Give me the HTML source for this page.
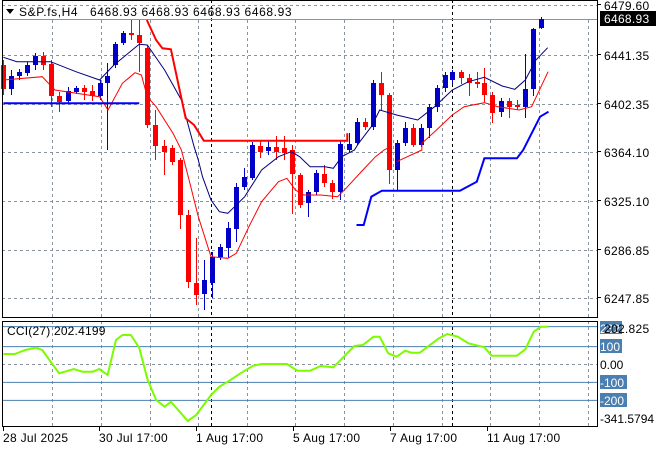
<!DOCTYPE html><html><head><style>
body{margin:0;background:#fff;width:660px;height:450px;overflow:hidden}
svg{display:block;font-family:"Liberation Sans",sans-serif;font-size:12px}
</style></head><body>
<svg id="s" width="660" height="450" xmlns="http://www.w3.org/2000/svg"></svg>
<script>
var S=document.getElementById('s'),h='';
var K=2.37;
function X(z){return z/K}
function line(x1,y1,x2,y2,c,w,d){h+='<line x1="'+x1+'" y1="'+y1+'" x2="'+x2+'" y2="'+y2+'" stroke="'+c+'" stroke-width="'+(w||1)+'"'+(d?' stroke-dasharray="'+d+'"':'')+'/>';}
function txt(x,y,t,c,a,ls){h+='<text x="'+x+'" y="'+y+'" fill="'+(c||'#000')+'"'+(a?' text-anchor="'+a+'"':'')+(ls?' letter-spacing="'+ls+'"':'')+'>'+t+'</text>';}
var gx=[52,101,150,198,247,295,344,393,442,490,539,588];
gx.forEach(function(x){line(x+.5,20,x+.5,317,'#8a93a0',1,'3,3');line(x+.5,321,x+.5,426,'#8a93a0',1,'3,3');});
[5,55,104,152,201,250,298].forEach(function(y){line(2,y+.5,597,y+.5,'#8a93a0',1,'3,3');});
[211,452].forEach(function(x){line(x+.5,0,x+.5,317,'#000',1,'3,3');line(x+.5,321,x+.5,426,'#000',1,'3,3');});
line(2,19.5,597,19.5,'#8a93a0',1);
var C=[[8,'r',65,89,60,95],[26,'b',76,89,70,95],[46,'b',72,76,69,80],[64,'b',65,73,62,76],[83,'b',56,65,53,70],[103,'r',56,65,52,70],[122,'r',64,96,60,107],[141,'r',96,102,92,112],[160,'b',91,101,87,103],[179,'b',88,92,86,94],[198,'r',88,92,85,100],[217,'r',91,96,85,101],[236,'b',83,96,80,100],[254,'b',76,83,63,150],[273,'b',44,65,42,68],[292,'b',33,43,31,45],[311,'r',33,35,20,40],[330,'r',35,43,20,72],[349,'r',48,125,45,128],[368,'r',125,146,110,160],[388,'r',146,152,140,175],[407,'r',148,162,145,165],[427,'r',160,215,158,229],[446,'r',215,282,210,288],[465,'r',283,295,238,305],[484,'b',280,294,260,310],[502,'b',257,283,252,298],[521,'b',247,257,244,260],[541,'b',228,248,222,258],[559,'b',187,229,183,242],[578,'b',177,187,168,190],[597,'b',145,178,142,180],[616,'r',146,152,140,158],[636,'b',147,151,140,155],[655,'r',147,152,136,160],[674,'r',148,153,136,160],[692,'r',150,174,145,214],[711,'r',175,205,173,208],[730,'b',192,203,190,217],[749,'b',173,192,170,195],[768,'r',174,183,165,187],[787,'r',183,192,180,199],[806,'b',144,192,140,200],[826,'b',144,150,133,152],[845,'b',122,143,118,145],[864,'r',122,127,118,130],[883,'b',83,127,80,130],[902,'r',83,95,72,110],[921,'r',95,170,93,184],[940,'b',143,170,140,190],[959,'b',128,143,122,146],[978,'r',128,145,124,147],[997,'b',128,145,124,147],[1016,'b',107,128,104,138],[1035,'b',88,107,85,112],[1054,'b',75,88,72,92],[1072,'b',72,80,70,84],[1092,'r',72,78,70,84],[1111,'r',78,83,74,96],[1130,'r',82,84,72,88],[1148,'r',83,95,68,102],[1167,'r',95,113,92,123],[1187,'b',101,112,98,117],[1206,'r',101,107,98,118],[1225,'r',105,107,100,110],[1244,'b',89,107,54,118],[1263,'b',29,89,28,96],[1282,'b',19,28,17,29]];
C.forEach(function(c){var x=Math.round(X(c[0]))+.5,col=c[1]=='r'?'#ff0000':'#0000c8';
line(x,c[4],x,c[5],col,1);h+='<rect x="'+(x-2.5)+'" y="'+c[2]+'" width="5" height="'+Math.max(1,c[3]-c[2])+'" fill="'+col+'"/>';});
function pl(pts,col,w){var s=pts.map(function(p){return X(p[0]).toFixed(1)+','+(p[1]/3).toFixed(1)}).join(' ');h+='<polyline points="'+s+'" fill="none" stroke="'+col+'" stroke-width="'+w+'"/>';}
function z2(a){return a.map(function(p){return [p[0],p[1]+450]})}
pl([[8,172],[40,185],[120,185],[180,215],[236,240],[270,195],[330,133],[349,135],[390,210],[430,300],[460,440]].concat(z2([[470,30],[480,80],[500,150],[520,185],[540,190],[560,165],[580,140],[620,60],[660,20],[690,5],[710,20],[735,50],[770,50],[790,55],[810,20],[840,0]])).concat([[850,430],[880,380],[900,330],[940,345],[990,360],[1030,320],[1072,270],[1110,245],[1148,232],[1190,258],[1220,268],[1245,240],[1270,180],[1298,143]]),'#000080',1);
pl([[8,240],[100,230],[130,270],[236,290],[256,330],[290,250],[320,218],[335,225],[349,290],[370,320],[410,400],[430,450]].concat(z2([[450,100],[470,200],[500,320],[540,325],[560,310],[590,230],[620,155],[660,95],[680,85],[700,120],[720,135],[760,135],[800,140],[820,115],[860,60],[890,20],[910,0]])).concat([[925,440]]),'#ff0000',1);
pl(z2([[940,35],[1000,0]]).concat([[1000,430],[1030,395],[1072,345],[1100,320],[1148,308],[1180,320],[1230,330],[1260,320],[1299,215]]),'#ff0000',1);
pl([[348,60],[370,120],[385,145],[405,148],[440,355],[460,375],[483,422],[823,422],[823,400]],'#ff0000',2);
pl([[8,310],[330,310]],'#0000ff',2);
pl(z2([[845,225],[862,225],[880,140],[905,122],[1090,122],[1130,95],[1148,25],[1225,25],[1240,0]]).concat([[1280,350],[1300,335]]),'#0000ff',2);
[35,95,202,256].forEach(function(l){var y=315+l/3;line(2,y,597,y,'#4a7fb0',1);});
line(2,364.5,597,364.5,'#8a93a0',1,'3,3');
var cc=[[8,117],[35,117],[60,105],[85,98],[100,105],[140,175],[175,162],[195,170],[220,170],[235,162],[255,180],[275,75],[290,60],[310,60],[330,98],[350,195],[370,255],[390,275],[405,260],[445,318],[465,300],[500,240],[520,215],[540,200],[570,175],[600,152],[620,147],[680,147],[705,167],[735,167],[760,153],[790,157],[840,93],[860,90],[885,65],[900,65],[920,115],[940,125],[960,107],[975,113],[995,113],[1040,70],[1060,57],[1085,65],[1110,85],[1148,97],[1165,122],[1225,122],[1245,103],[1265,50],[1282,35],[1300,35]];
h+='<polyline points="'+cc.map(function(p){return X(p[0]).toFixed(1)+','+(315+p[1]/3).toFixed(1)}).join(' ')+'" fill="none" stroke="#7cfc00" stroke-width="2"/>';
h+='<rect x="2.5" y="0.5" width="595" height="317" fill="none" stroke="#000"/>';
h+='<rect x="2.5" y="321.5" width="595" height="105" fill="none" stroke="#000"/>';
[[9,'6479.60'],[59,'6441.35'],[108,'6402.35'],[156,'6364.10'],[205,'6325.10'],[254,'6286.85'],[302,'6247.85']].forEach(function(l){line(597,l[0]-4.5,601,l[0]-4.5,'#000');txt(604,l[0]+1,l[1],'#000',0,0.3);});
h+='<rect x="600" y="11" width="56" height="15" fill="#000"/>';txt(604,23,'6468.93','#fff',0,0.3);
h+='<rect x="600" y="321" width="22" height="13" fill="#4a7fb0"/>';txt(600,333,'232','#fff');txt(604,333,'202.825','#000',0,0.3);
h+='<rect x="600" y="339" width="22" height="14" fill="#4a7fb0"/>';txt(600,351,'100','#fff');
txt(600,369,'0.00');
h+='<rect x="600" y="375" width="27" height="14" fill="#4a7fb0"/>';txt(600,387,'-100','#fff');
h+='<rect x="600" y="393" width="27" height="14" fill="#4a7fb0"/>';txt(600,405,'-200','#fff');
txt(600,423,'-341.5794');
txt(7,335,'CCI(27) 202.4199','#000',0,0.2);
h+='<polygon points="6,9 14,9 10,14" fill="#000"/>';
txt(19,16,'S&amp;P.fs,H4&#160;&#160;&#160;6468.93 6468.93 6468.93 6468.93','#000',0,0.6);
[[3,'28 Jul 2025'],[99,'30 Jul 17:00'],[196,'1 Aug 17:00'],[293,'5 Aug 17:00'],[390,'7 Aug 17:00'],[487,'11 Aug 17:00']].forEach(function(t){line(t[0]+.5,427,t[0]+.5,431,'#000');txt(t[0],442,t[1],'#000',0,0.3);});
S.innerHTML=h;
</script>
</body></html>
